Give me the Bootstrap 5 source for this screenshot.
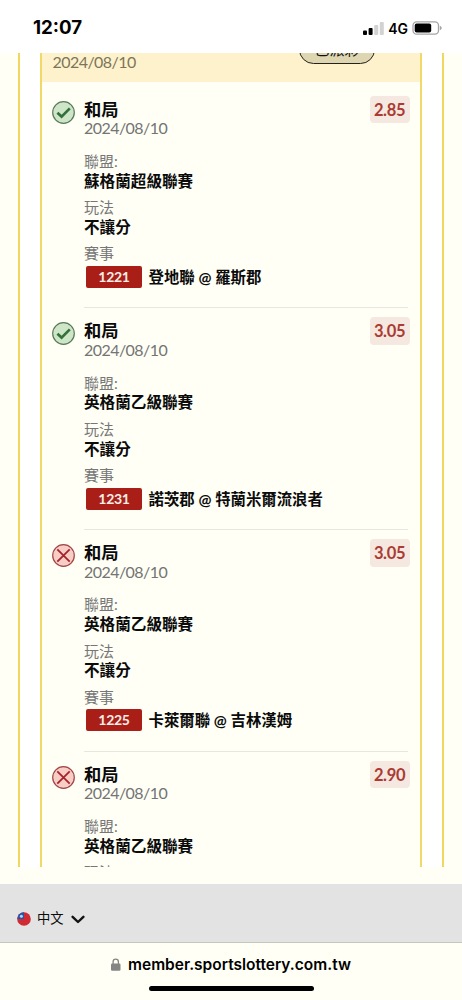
<!DOCTYPE html>
<html lang="zh-Hant">
<head>
<meta charset="utf-8">
<meta name="viewport" content="width=device-width, initial-scale=1">
<title>投注紀錄</title>
<link href="https://cdn.jsdelivr.net/npm/bootstrap@5.3.0/dist/css/bootstrap.min.css" rel="stylesheet">
<style>
body{font-family:Lato,"Noto Sans CJK TC",sans-serif;background:#fffff5;color:#0b0b0b;height:1000px}
.statusbar{height:53px;padding:3px 20px 0 33px;font-family:Inter,sans-serif}
.clock{font-size:18.7px;font-weight:700}
.net{font-size:14px;font-weight:600}
.viewport{height:814px;padding:0 18px}
.ticket{background:#fff;border:solid #f1d75f;border-width:0 2px;padding:0 20px}
.slip{background:#fffff5;border:solid #f1d968;border-width:0 2.5px}
.slip-head{height:28.5px;background:#fdf2cc;padding:0 45px 10.5px 10.5px;margin-bottom:5px}
.day{font-size:16px;line-height:19px;color:#747474;letter-spacing:-.55px}
.slip-head .day{color:#7d7559}
.pill{width:76px;height:29px;border:1.5px solid #24221a;border-radius:15px;background:#ddd6b0;font-size:15px;line-height:26px;color:#111;margin-bottom:7px}
.leg{height:221.8px;padding:13px 9.5px 0 10px}
.leg-body{margin-left:9px;height:208.8px;border-bottom:1.5px solid #e7e6df;margin-right:3px}
.state{width:23px;height:23px;margin-top:1px}
.pick{font-size:17.3px;font-weight:700;line-height:18.5px;padding-top:1px;margin-bottom:-1px}
.lbl{font-size:15px;line-height:20px;color:#777}
.val{font-size:15.6px;line-height:20px;font-weight:700;margin:-.2px 0 6.4px}
.first{margin-top:13.8px}
.code{width:56px;height:22px;margin:0 6.5px 0 2px;background:#a91f18;border-radius:2px;color:#f8efe8;font-size:14px;font-weight:700;line-height:22px;letter-spacing:-.3px}
.match{font-size:15.4px;font-weight:700;line-height:22px}
.event{margin-top:2.5px}
.odds{width:40px;height:27.5px;margin:-4px -2px 0 0;border-radius:4px;background:#f4e8e1;color:#ab3b32;font-size:16.5px;font-weight:700;line-height:28px;letter-spacing:-.35px}
.langbar{height:59px;margin-top:17px;background:#e3e3e3;border-bottom:1px solid #c5c5c1;padding:12.5px 17px 0;font-size:13.3px}
.flag-gap{margin:0 7px 0 6px}
.urlbar{height:57px;font-family:Inter,sans-serif;font-weight:600;font-size:15.5px;padding-top:9.5px}
.lock{margin-right:7px}
.homebar{width:165px;height:5.5px;background:#000;margin-top:10px}
</style>
</head>
<body class="overflow-hidden">
<header class="statusbar bg-white d-flex align-items-center justify-content-between text-black">
  <span class="clock">12:07</span>
  <span class="d-flex align-items-center">
    <svg width="21" height="13" viewBox="0 0 21 13"><rect y="8.5" width="4" height="4.5" rx="1"/><rect x="5.6" y="6" width="4" height="7" rx="1"/><g fill="#d2d2d2"><rect x="11.2" y="3" width="4" height="10" rx="1"/><rect x="16.8" width="4" height="13" rx="1"/></g></svg>
    <span class="net mx-1">4G</span>
    <svg width="30" height="14" viewBox="0 0 30 14"><rect x="1" y=".8" width="25.5" height="12.4" rx="3.6" fill="none" stroke="#a5a5a5" stroke-width="1.3"/><rect x="2.7" y="2.4" width="16.5" height="9.2" rx="2"/><path d="M27.8 4.8q2 .8 2 2.2t-2 2.2z" fill="#a5a5a5"/></svg>
  </span>
</header>
<main class="viewport overflow-hidden">
  <div class="ticket h-100">
    <section class="slip h-100 overflow-hidden">
      <div class="slip-head d-flex align-items-end justify-content-between overflow-hidden"><span class="day">2024/08/10</span><span class="pill text-center flex-shrink-0">已派彩</span></div>
      <div id="legs"></div>
    </section>
  </div>
</main>
<footer>
  <div class="langbar d-flex align-items-center">
    <svg width="14" height="14" viewBox="0 0 14 14"><circle cx="7" cy="7" r="6.8" fill="#d02a35"/><path d="M.2 7A6.8 6.8 0 0 1 7 .2V7z" fill="#2457a8"/><circle cx="4.4" cy="4.3" r="1.5" fill="#b9d9f2"/></svg>
    <span class="flag-gap">中文</span>
    <svg width="14" height="9" viewBox="0 0 14 9" fill="none" stroke="#111" stroke-width="2.4" stroke-linecap="round" stroke-linejoin="round"><path d="M1.6 1.8 7 7l5.4-5.2"/></svg>
  </div>
  <div class="urlbar d-flex flex-column align-items-center">
    <div class="d-flex align-items-center text-black">
      <svg class="lock" width="10" height="13" viewBox="0 0 10 13"><rect y="5.5" width="9.5" height="7.3" rx="1.3" fill="#858585"/><path d="M2.1 6V3.7a2.65 2.65 0 0 1 5.3 0V6" fill="none" stroke="#858585" stroke-width="1.3"/></svg>
      <span class="url">member.sportslottery.com.tw</span>
    </div>
    <div class="homebar rounded-pill"></div>
  </div>
</footer>
<script src="https://cdn.jsdelivr.net/npm/bootstrap@5.3.0/dist/js/bootstrap.bundle.min.js"></script>
<script>
const legs = [
  [true, '2.85', '蘇格蘭超級聯賽', '1221', '登地聯 @ 羅斯郡'],
  [true, '3.05', '英格蘭乙級聯賽', '1231', '諾茨郡 @ 特蘭米爾流浪者'],
  [false, '3.05', '英格蘭乙級聯賽', '1225', '卡萊爾聯 @ 吉林漢姆'],
  [false, '2.90', '英格蘭乙級聯賽', '', '']
];
const won = '<circle cx="11.5" cy="11.5" r="10.8" fill="#cfe5c8" stroke="#577a57" stroke-width="1.2"/><path d="M5.4 11.7 9.6 15.6l8.2-8.2" fill="none" stroke="#34703a" stroke-width="2.7"/>';
const lost = '<circle cx="11.5" cy="11.5" r="10.8" fill="#f7cdc6" stroke="#a14545" stroke-width="1.2"/><path d="M5.3 5.3l12.4 12.4M17.7 5.3 5.3 17.7" fill="none" stroke="#a5262a" stroke-width="1.8"/>';
document.getElementById('legs').innerHTML = legs.map(([ok, odds, league, code, match]) => `
  <article class="leg d-flex">
    <svg class="state flex-shrink-0" viewBox="0 0 23 23">${ok ? won : lost}</svg>
    <div class="leg-body flex-grow-1">
      <div class="d-flex justify-content-between">
        <div><div class="pick">和局</div><div class="day">2024/08/10</div></div>
        <div class="odds text-center">${odds}</div>
      </div>
      <div class="lbl first">聯盟:</div><div class="val">${league}</div>
      <div class="lbl">玩法</div>${code ? `<div class="val">不讓分</div>
      <div class="lbl">賽事</div>
      <div class="event d-flex"><span class="code text-center">${code}</span><span class="match">${match}</span></div>` : ''}
    </div>
  </article>`).join('');
</script>
</body>
</html>
